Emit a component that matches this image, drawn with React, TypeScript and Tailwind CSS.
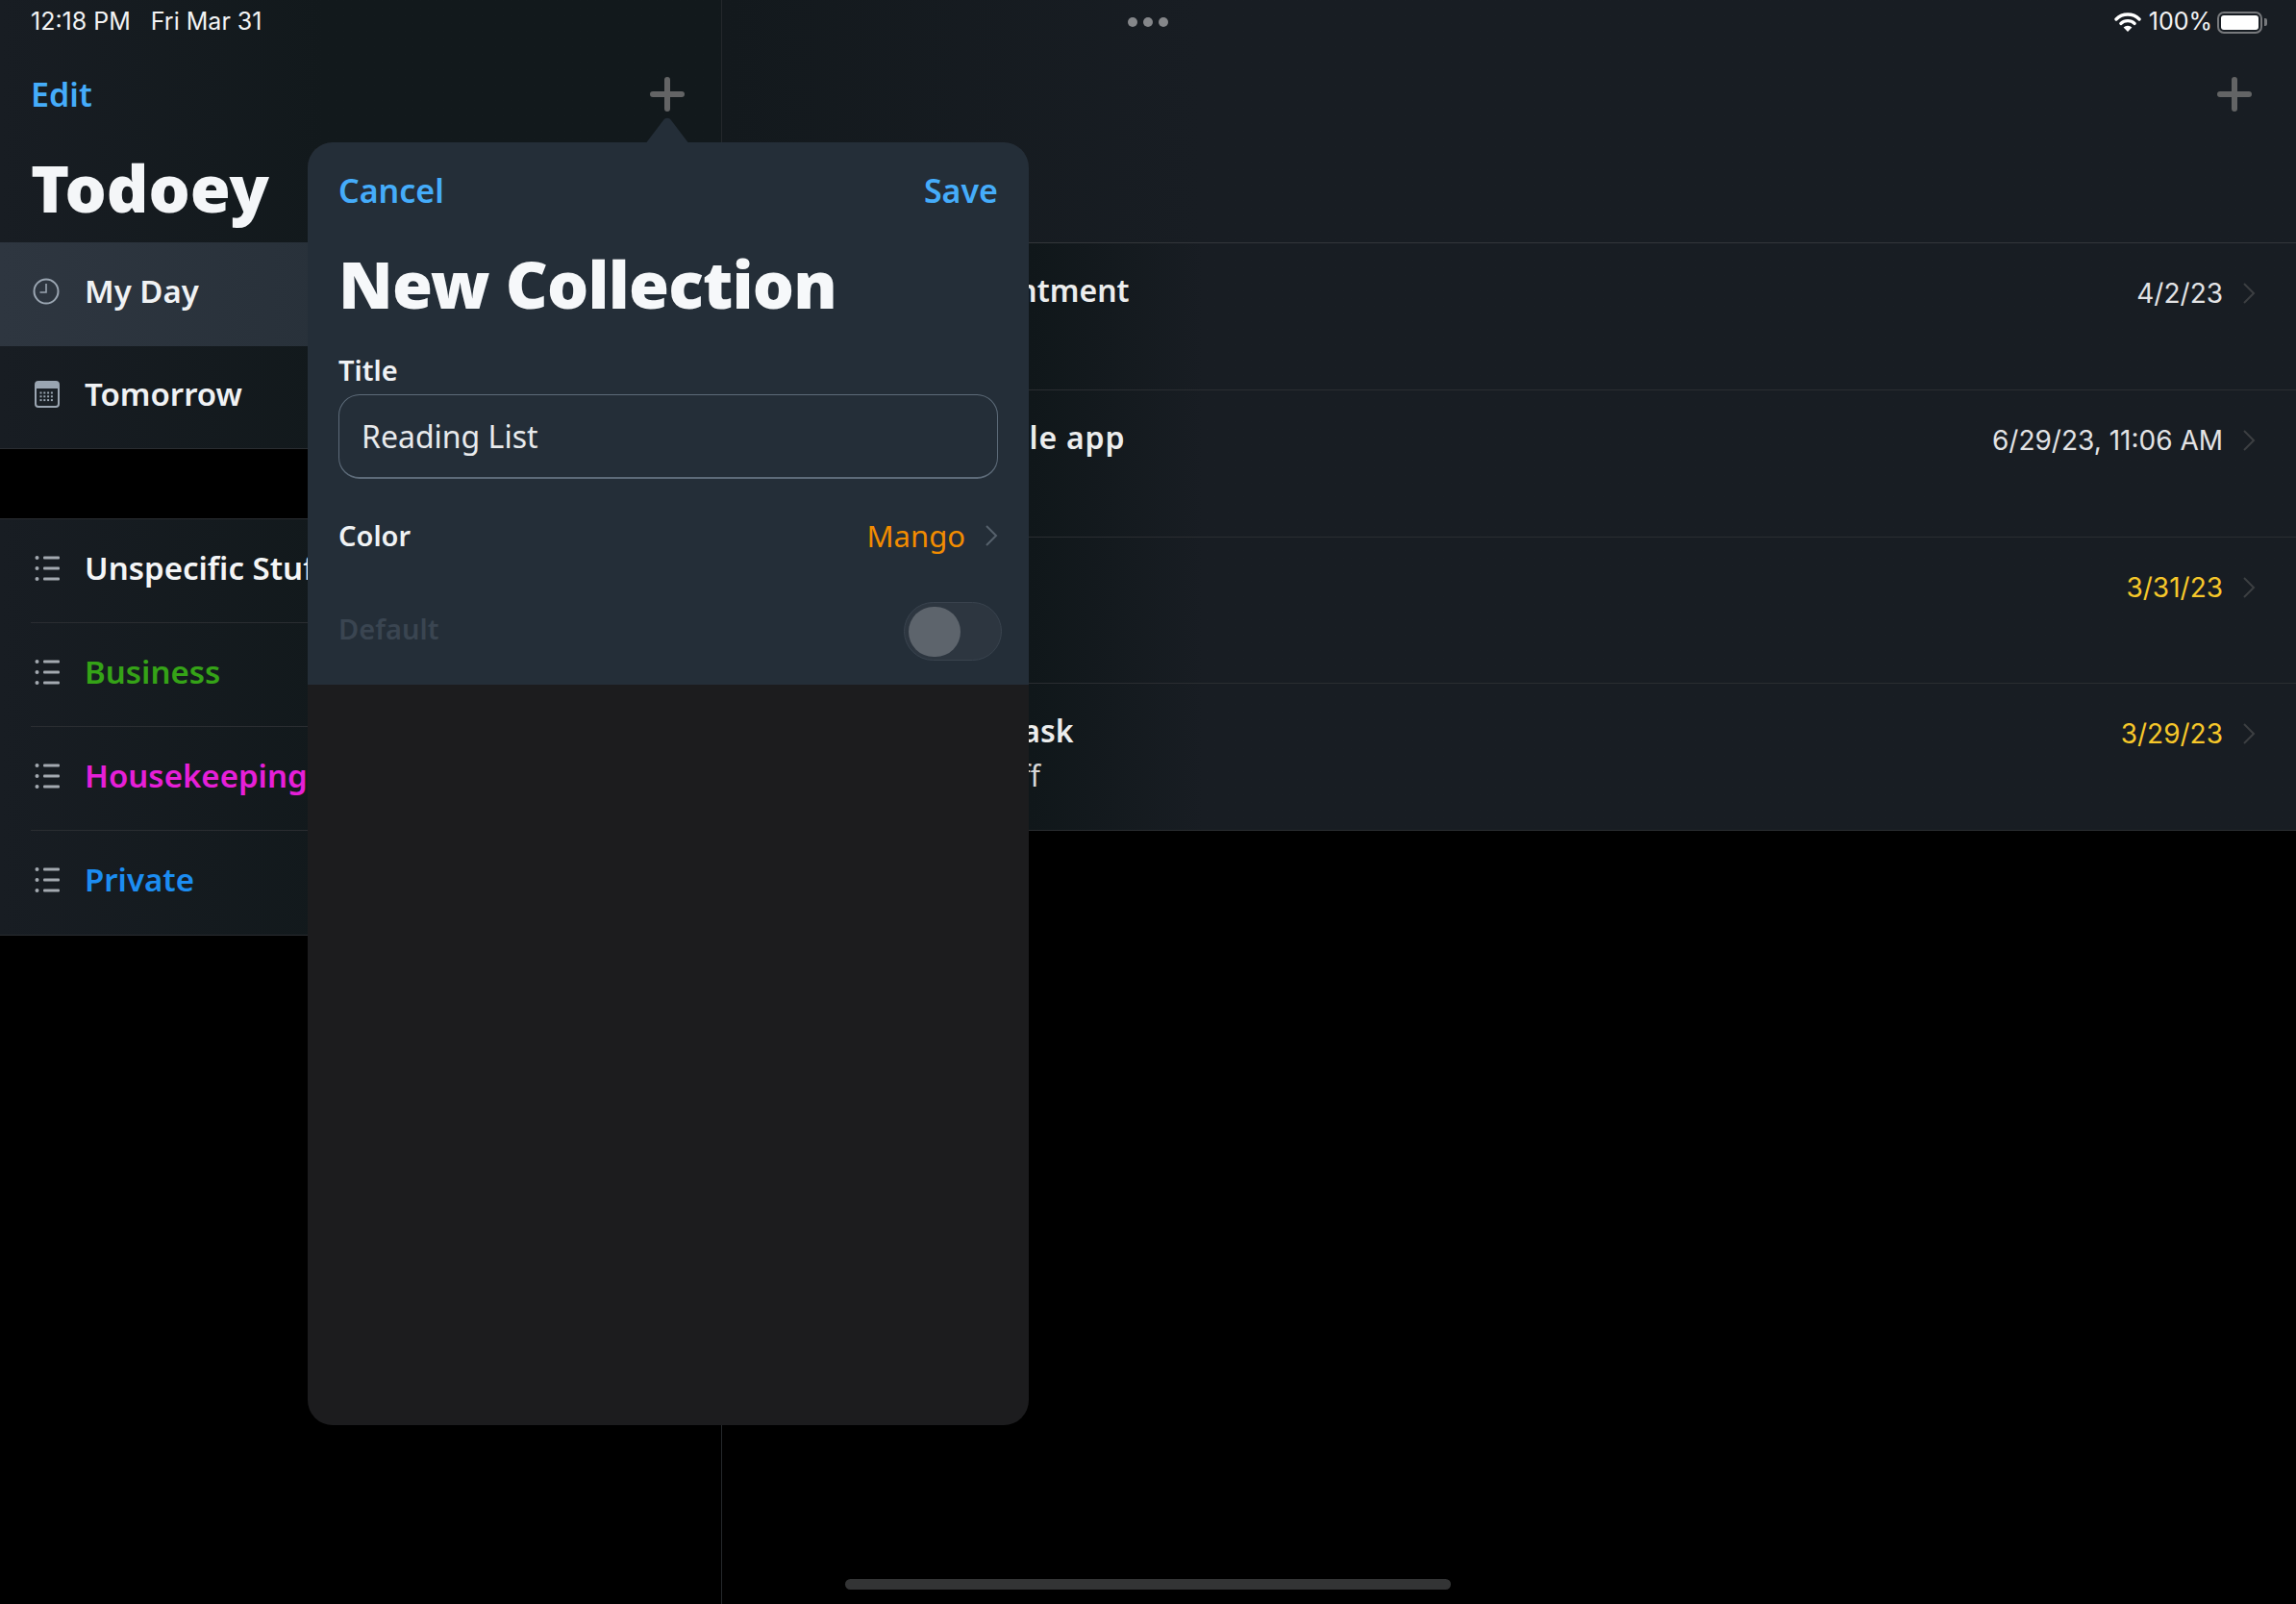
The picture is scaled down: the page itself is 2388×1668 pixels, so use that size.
import React from 'react';

const plex = "font-['Noto_Sans',sans-serif]";
const sf = "font-['Inter',sans-serif]";
// popover casts a soft darkening on what sits next to it
const sideBg = 'bg-linear-to-r from-[#181d23] to-[#12191c] to-[45%]';
const detailBg = 'bg-linear-to-r from-[#10171a] from-[320px] to-[#181d23] to-[500px]';

function Plus() {
  return (
    <svg width="36" height="36" viewBox="0 0 36 36" className="text-[#636465]">
      <path d="M18 3v30M3 18h30" stroke="currentColor" strokeWidth="6" strokeLinecap="round" />
    </svg>
  );
}

function Chevron({ color }: { color: string }) {
  return (
    <svg width="14" height="24" viewBox="0 0 14 24" fill="none" style={{ color }}>
      <path d="M2 2l10 10L2 22" stroke="currentColor" strokeWidth="2" />
    </svg>
  );
}

function ClockIcon() {
  return (
    <svg width="28" height="28" viewBox="0 0 28 28" fill="none" className="text-[#9aa5b1]">
      <circle cx="14" cy="14" r="12.5" stroke="currentColor" strokeWidth="2" />
      <path d="M14 6v9H7.5" stroke="currentColor" strokeWidth="1.6" />
    </svg>
  );
}

function CalendarIcon() {
  const dots = [];
  for (let r = 0; r < 3; r++) {
    for (let c = 0; c < 4; c++) {
      dots.push(<rect key={`${r}-${c}`} x={5.5 + c * 3.8} y={11.5 + r * 3.8} width="2" height="2" fill="#9aa5b1" />);
    }
  }
  return (
    <svg width="26" height="28" viewBox="0 0 26 28" fill="none">
      <rect x="1" y="1" width="24" height="26" rx="3" fill="#1a2026" stroke="#9aa5b1" strokeWidth="2" />
      <path d="M1 4a3 3 0 013-3h18a3 3 0 013 3v4H1z" fill="#9aa5b1" />
      {dots}
    </svg>
  );
}

function ListIcon() {
  return (
    <svg width="26" height="28" viewBox="0 0 26 28" fill="none" className="text-[#a3a9b0]">
      <g fill="currentColor">
        <circle cx="2.5" cy="3" r="2" />
        <circle cx="2.5" cy="14" r="2" />
        <circle cx="2.5" cy="25" r="2" />
        <rect x="9" y="1.5" width="17" height="3" rx="1" />
        <rect x="9" y="12.5" width="17" height="3" rx="1" />
        <rect x="9" y="23.5" width="17" height="3" rx="1" />
      </g>
    </svg>
  );
}

function Wifi() {
  return (
    <svg width="28" height="20" viewBox="0 0 28 20" fill="none" className="text-white">
      <path d="M2 7a17 17 0 0124 0" stroke="currentColor" strokeWidth="3.4" strokeLinecap="round" />
      <path d="M6.8 11.5a10.5 10.5 0 0114.4 0" stroke="currentColor" strokeWidth="3.2" strokeLinecap="round" />
      <path d="M14 20l-4.4-4.4a6.4 6.4 0 018.8 0z" fill="currentColor" />
    </svg>
  );
}

function Battery() {
  return (
    <div className="flex items-center gap-[2px]">
      <div className="w-[47px] h-[23px] rounded-[7px] border-2 border-[#77797c] p-[2px]">
        <div className="w-full h-full rounded-[3px] bg-white" />
      </div>
      <div className="w-[3px] h-[8px] rounded-r-[2px] bg-[#77797c]" />
    </div>
  );
}

const lists = [
  { name: 'Unspecific Stuff', color: 'text-[#f4f5f6]' },
  { name: 'Business', color: 'text-[#35a317]' },
  { name: 'Housekeeping', color: 'text-[#e61fd8]' },
  { name: 'Private', color: 'text-[#1c8df2]' },
];

const tasks = [
  { title: 'Dentist appointment', sub: '', date: '4/2/23', pad: 'pl-[98px]', dateColor: 'text-[#e2e3e5]' },
  { title: 'Publish the mobile app', sub: '', date: '6/29/23, 11:06 AM', pad: 'pl-[44px] tracking-[0.8px]', dateColor: 'text-[#e2e3e5]' },
  { title: 'Buy milk', sub: '', date: '3/31/23', pad: 'pl-[32px]', dateColor: 'text-[#f7c82a]' },
  { title: 'Unspecific task', sub: 'Some stuff', date: '3/29/23', pad: 'pl-[130px]', dateColor: 'text-[#f7c82a]' },
];

export default function App() {
  return (
    <div className={`relative w-[2388px] h-[1668px] bg-black flex overflow-hidden ${plex}`}>
      {/* sidebar */}
      <div className="w-[751px] h-full border-r border-[#24272b] flex flex-col">
        <div className={`h-[252px] ${sideBg} flex flex-col pl-[32px] pr-[38px]`}>
          <div className={`h-[46px] flex items-center gap-[21px] text-[25px] text-[#f2f3f4] ${sf}`}>
            <span>12:18 PM</span>
            <span>Fri Mar 31</span>
          </div>
          <div className="h-[104px] flex items-center justify-between">
            <span className="text-[34px] font-semibold text-[#45acfa]">Edit</span>
            <Plus />
          </div>
          <div className="mt-[5px] text-[68px] font-black leading-[80px] text-[#f4f6f8]">Todoey</div>
        </div>
        <div className="h-[108px] bg-linear-to-r from-[#2e3640] to-[#28313a] to-[45%] flex items-center pl-[34px] pb-[6px]">
          <ClockIcon />
          <span className="ml-[26px] text-[33px] font-semibold text-[#f0f2f4]">My Day</span>
        </div>
        <div className={`h-[107px] ${sideBg} border-b border-[#2a2d31] flex items-center pl-[36px] pb-[6px]`}>
          <CalendarIcon />
          <span className="ml-[26px] text-[33px] font-semibold text-[#f0f2f4]">Tomorrow</span>
        </div>
        <div className="h-[72px]" />
        <div className={`${sideBg} border-y border-[#2a2d31]`}>
          {lists.map((item, i) => (
            <div key={item.name} className="h-[108px] pl-[32px]">
              <div className={`h-full flex items-center pl-[4px] pb-[6px] ${i < lists.length - 1 ? 'border-b border-[#2a2d31]' : ''}`}>
                <ListIcon />
                <span className={`ml-[26px] text-[33px] font-semibold ${item.color}`}>{item.name}</span>
              </div>
            </div>
          ))}
        </div>
      </div>

      {/* detail */}
      <div className="flex-1 flex flex-col">
        <div className="h-[253px] bg-linear-to-r from-[#13191d] to-[#181d23] to-[500px] border-b border-[#33363a] pr-[30px]">
          <div className="h-[46px] flex items-center justify-between">
            <div className="ml-[422px] flex gap-[6px]">
              <div className="w-[10px] h-[10px] rounded-full bg-[#85878a]" />
              <div className="w-[10px] h-[10px] rounded-full bg-[#85878a]" />
              <div className="w-[10px] h-[10px] rounded-full bg-[#85878a]" />
            </div>
            <div className={`flex items-center gap-[8px] text-[25px] text-[#f2f3f4] ${sf}`}>
              <Wifi />
              <span className="-mr-[3px]">100%</span>
              <Battery />
            </div>
          </div>
          <div className="h-[104px] flex items-center justify-end pr-[16px]">
            <Plus />
          </div>
        </div>
        {tasks.map((t) => (
          <div key={t.date} className={`h-[152.75px] ${detailBg} border-b border-[#2a2d31] flex items-start justify-between pr-[42px]`}>
            <div className={`${t.pad} pt-[27px] text-[32px] font-semibold leading-[44px] text-[#eceded] whitespace-nowrap`}>
              {t.title}
              {t.sub && <div className="ml-[49px] mt-[3px] text-[30px] font-normal leading-[44px] text-[#d6d7d9]">{t.sub}</div>}
            </div>
            <div className={`flex items-center gap-[20px] pt-[31px] text-[28px] ${sf}`}>
              <span className={t.dateColor}>{t.date}</span>
              <Chevron color="#3c3f42" />
            </div>
          </div>
        ))}
      </div>

      {/* new collection popover */}
      <div className="absolute left-[320px] top-[148px] w-[750px] h-[1334px] rounded-[26px]">
        <svg width="54" height="28" viewBox="0 0 54 28" className="absolute left-[347px] -top-[26px] text-[#242e38]">
          <path d="M0 28c3 0 5-1 7-4L23 3c2-3 6-3 8 0l16 21c2 3 4 4 7 4z" fill="currentColor" />
        </svg>
        <div className="relative h-full rounded-[26px] overflow-hidden bg-[#1c1c1e] flex flex-col">
          <div className="h-[564px] bg-[#242e38] pl-[32px] pr-[32px] flex flex-col">
            <div className="h-[100px] flex items-center justify-between text-[34px] font-semibold text-[#45acfa]">
              <span>Cancel</span>
              <span>Save</span>
            </div>
            <div className="mt-[2px] text-[68px] font-black leading-[90px] tracking-[-0.8px] text-[#f6f8fa]">New Collection</div>
            <div className="mt-[25px] text-[29px] font-semibold leading-[40px] text-[#f0f2f4]">Title</div>
            <div className="mt-[5px] h-[88px] rounded-[22px] border border-[#5d6b79] border-b-2 flex items-center pl-[23px] text-[32px] text-[#e8eaec]">
              Reading List
            </div>
            <div className="h-[120px] flex items-center justify-between pb-[2px]">
              <span className="text-[29px] font-semibold text-[#f0f2f4]">Color</span>
              <div className="flex items-center gap-[20px]">
                <span className="text-[31px] text-[#f28c00]">Mango</span>
                <Chevron color="#56616c" />
              </div>
            </div>
            <div className="mt-[8px] flex items-center justify-between -mr-[4px]">
              <span className="pb-[5px] text-[29px] font-semibold text-[#3a4551]">Default</span>
              <div className="w-[102px] h-[61px] rounded-full border border-[#39434e] bg-[#2d3640] p-[4px]">
                <div className="w-[54px] h-[52px] rounded-full bg-[#5d646c]" />
              </div>
            </div>
          </div>
        </div>
      </div>

      {/* home indicator */}
      <div className="absolute left-[879px] top-[1642px] w-[630px] h-[11px] rounded-full bg-[#333435]" />
    </div>
  );
}
